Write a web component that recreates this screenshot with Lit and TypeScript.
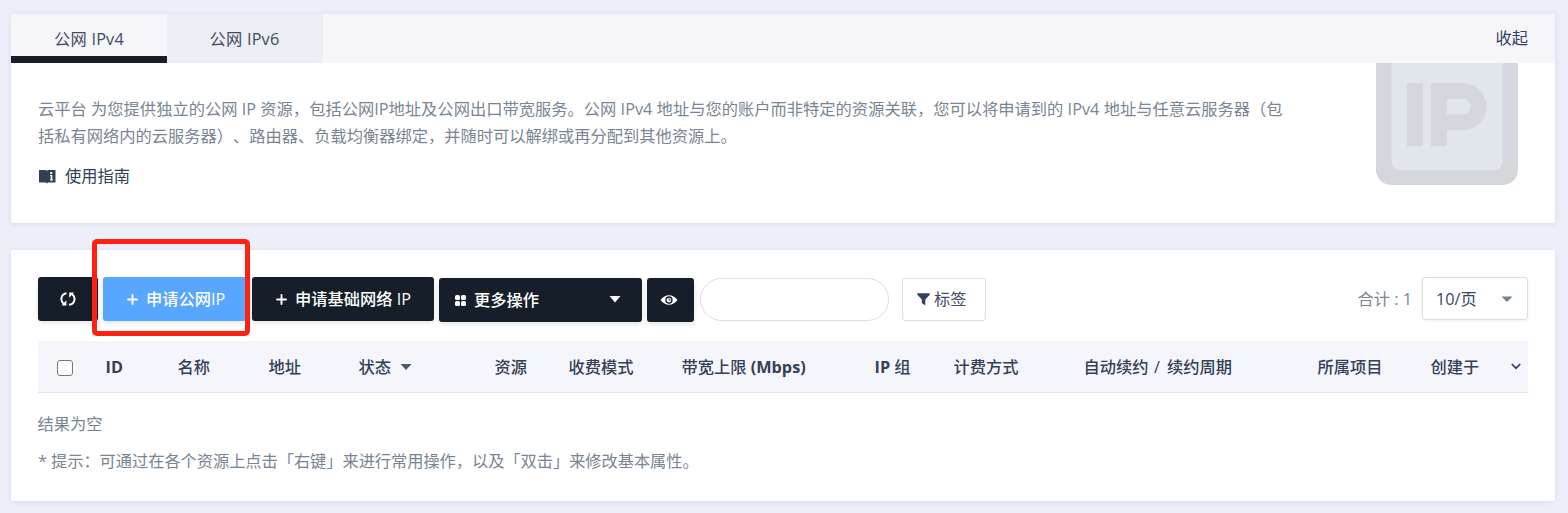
import { LitElement, html, css, svg } from 'lit';
import { customElement } from 'lit/decorators.js';

interface Column {
  label: unknown;
  width: number;
  sortable?: boolean;
}

const COLUMNS: Column[] = [
  { label: html`<b>ID</b>`, width: 72 },
  { label: '名称', width: 91 },
  { label: '地址', width: 90 },
  { label: '状态', width: 136, sortable: true },
  { label: '资源', width: 74 },
  { label: '收费模式', width: 113 },
  { label: html`带宽上限 <b>(Mbps)</b>`, width: 193 },
  { label: html`<b>IP</b> 组`, width: 79 },
  { label: '计费方式', width: 130 },
  { label: html`自动续约<i> / </i>续约周期`, width: 234 },
  { label: '所属项目', width: 113 },
  { label: '创建于', width: 80 },
];

const plus = svg`<path d="M5.5 1v9M1 5.5h9" stroke="currentColor" stroke-width="1.9" stroke-linecap="round" fill="none"/>`;

@customElement('app-root')
export class AppRoot extends LitElement {
  static styles = css`
    :host {
      display: block;
      box-sizing: border-box;
      height: 513px;
      padding: 14px 13px 0 11px;
      overflow: hidden;
      position: relative;
      background: #eceff8;
      font: 16.25px/27px 'Open Sans', 'Noto Sans CJK SC', sans-serif;
      text-spacing-trim: space-all;
      color: #798592;
      white-space: nowrap;
    }
    * { box-sizing: border-box; }
    svg { display: block; flex: none; }
    .card { background: #fff; border-radius: 2px; box-shadow: 0 1px 5px rgba(60, 80, 120, 0.12); }
    .intro { height: 209px; overflow: hidden; }
    .tabs { display: flex; height: 49px; background: #f6f5fa; color: #434a66; }
    .tab { width: 156px; padding-top: 12px; text-align: center; border-right: 1px solid #e6eef2; letter-spacing: 0.2px; }
    .tab.active { border-right: 0; border-bottom: 7px solid #161f29; }
    .tab.other { background: #ebeff3; }
    .collapse { margin-left: auto; padding: 11px 27px 0 0; color: #343f61; }
    .body { display: flex; justify-content: space-between; padding: 0 37px 0 27px; }
    .desc { padding-top: 33px; }
    .guide { display: flex; align-items: center; gap: 9px; margin-top: 13px; color: #2f4157; }
    .line { display: block; }
    .l1 { letter-spacing: 0.02px; }
    .list { height: 251px; margin-top: 27px; padding: 27px 27px 0; }
    .toolbar { display: flex; height: 44px; }
    .btn { display: flex; align-items: center; height: 44px; background: #161f29; color: #fff; border-radius: 3px; font-weight: 500; box-shadow: 0 2px 5px rgba(22, 31, 41, 0.12); }
    .refresh { width: 60px; padding-left: 22px; }
    .apply { width: 144px; margin-left: 5px; padding-left: 24px; gap: 8px; background: #57a6ff; }
    .base { width: 182px; margin-left: 5px; padding-left: 24px; gap: 8px; }
    .more { width: 203px; margin: 1px 0 0 5px; padding: 0 21px 0 16px; gap: 8px; }
    .more svg:last-child { margin-left: auto; }
    .eye { width: 47px; margin: 1px 0 0 5px; padding-left: 13px; }
    .search { width: 189px; height: 43px; margin: 1px 0 0 6px; border: 1px solid #d3dfe9; border-radius: 22px; background: #fff; padding: 0 20px; outline: none; }
    .tag { display: flex; align-items: center; gap: 4px; width: 84px; height: 43px; margin: 1px 0 0 13px; padding-left: 14px; border: 1px solid #d3dfe9; border-radius: 3px; color: #434a66; }
    .total { margin-left: auto; padding: 9px 10px 0 0; }
    .page { display: flex; align-items: center; justify-content: space-between; width: 106px; height: 43px; padding: 1px 14px 0 13px; border: 1px solid #d3dfe9; border-radius: 3px; color: #36475c; box-shadow: 0 1px 3px rgba(60, 80, 120, 0.1); }
    .thead { display: flex; align-items: center; height: 52px; margin-top: 20px; background: #f5f6fb; border-bottom: 1px solid #e0e9f1; color: #343f58; font-weight: 500; }
    .check { flex: none; width: 68px; padding-left: 19px; }
    .box { width: 16px; height: 16px; margin-top: 3px; border: 1px solid #767676; border-radius: 3px; background: #fff; }
    .col { display: flex; flex: none; align-items: center; gap: 9px; padding-top: 1px; }
    .col span { margin-left: -0.5px; white-space: pre; }
    .col b { font-weight: 700; }
    .col i { font-style: normal; font-weight: 400; letter-spacing: 1.4px; }
    .empty { padding-top: 18px; margin-left: -0.5px; }
    .tip { padding-top: 10px; letter-spacing: -0.06px; }
    .marker { position: absolute; left: 92px; top: 239px; width: 158px; height: 97px; border: 5px solid #ff2212; border-radius: 5px; }
  `;

  render() {
    return html`
      <section class="card intro">
        <nav class="tabs">
          <div class="tab active">公网 IPv4</div>
          <div class="tab other">公网 IPv6</div>
          <div class="collapse">收起</div>
        </nav>
        <div class="body">
          <div class="desc">
            <span class="line l1">云平台 为您提供独立的公网 IP 资源，包括公网IP地址及公网出口带宽服务。公网 IPv4 地址与您的账户而非特定的资源关联，您可以将申请到的 IPv4 地址与任意云服务器（包</span>
            <span class="line">括私有网络内的云服务器）、路由器、负载均衡器绑定，并随时可以解绑或再分配到其他资源上。</span>
            <div class="guide">
              <svg width="18" height="15" viewBox="0 0 18 15">
                <path fill="#2f4157" d="M1 1h6.200q1.300 0 1.800.8.5-.8 1.800-.8H17.500v12.500h-7.300L9 14.500 7.800 13.500H1z"/>
                <path fill="#fff" d="M12.300 3h2v2h-2zM12 6h2.300v4.500h.7v1h-3v-1h.7V7H12z"/>
              </svg>
              <span>使用指南</span>
            </div>
          </div>
          <svg width="142" height="123" viewBox="0 0 142 123">
            <path fill="#d4d7dc" d="M0 0h142v107a15 15 0 0 1-15 15H15a15 15 0 0 1-15-15z"/>
            <path fill="#e1e6ea" d="M15.500 0h111v99a8 8 0 0 1-8 8h-95a8 8 0 0 1-8-8z"/>
            <path fill="#d4d7dc" fill-rule="evenodd" d="M31 20h16v63H31zM55 20h32a23.500 23.500 0 0 1 0 47H71v16H55zM71 36v15.500h16a7.750 7.750 0 0 0 0-15.500z"/>
          </svg>
        </div>
      </section>

      <section class="card list">
        <div class="toolbar">
          <div class="btn refresh">
            <svg width="16" height="16" viewBox="0 0 16 16">
              <path fill="none" stroke="#fff" stroke-width="1.900" d="M6.500 2.200C.8 3-.2 10 3.800 13M9 13.800c6.200-.8 7.200-7.800 2.800-10.800"/>
              <path fill="#fff" d="M6.400 9.300v5.200H1.600zM9.200 6.700V1.500H14z"/>
            </svg>
          </div>
          <div class="btn apply"><svg width="11" height="11">${plus}</svg><span>申请公网IP</span></div>
          <div class="btn base"><svg width="11" height="11">${plus}</svg><span>申请基础网络 IP</span></div>
          <div class="btn more">
            <svg width="11" height="11" fill="#fff">
              <rect width="5" height="5" rx="1.500"/><rect x="6" width="5" height="5" rx="1.500"/>
              <rect y="6" width="5" height="5" rx="1.500"/><rect x="6" y="6" width="5" height="5" rx="1.500"/>
            </svg>
            <span>更多操作</span>
            <svg width="12" height="9"><path fill="#fff" d="M.5 0h11L6 6.500z"/></svg>
          </div>
          <div class="btn eye">
            <svg width="18" height="12" viewBox="0 0 18 12">
              <path fill="#fff" d="M.5 6C5-.5 13-.5 17.500 6 13 12.300 5 12.300.5 6z"/>
              <circle cx="9" cy="6" r="3" fill="none" stroke="#161f29" stroke-width="1.300"/>
              <path d="M9 4.200V6h1.800" fill="none" stroke="#161f29" stroke-width=".8"/>
            </svg>
          </div>
          <input class="search" aria-label="搜索" />
          <div class="tag">
            <svg width="13" height="13"><path fill="#343f61" d="M.3.300h12.400v1.500L8.300 6.500v6L4.800 10V6.500L.3 1.800z"/></svg>
            <span>标签</span>
          </div>
          <div class="total">合计 : 1</div>
          <div class="page"><span>10/页</span><svg width="12" height="6"><path fill="#73818f" d="M.5.500h11L6 6z"/></svg></div>
        </div>

        <div class="thead">
          <div class="check"><div class="box"></div></div>
          ${COLUMNS.map((c) => html`
            <div class="col" style="width:${c.width}px">
              <span>${c.label}</span>
              ${c.sortable ? html`<svg width="12" height="6"><path fill="#4a5a6e" d="M.5 0h11L6 6z"/></svg>` : ''}
            </div>`)}
          <svg width="10" height="7"><path d="M.8 1l4.200 4.200L9.200 1" fill="none" stroke="#343f61" stroke-width="1.700"/></svg>
        </div>
        <div class="empty">结果为空</div>
        <div class="tip">* 提示：可通过在各个资源上点击「右键」来进行常用操作，以及「双击」来修改基本属性。</div>
      </section>
      <div class="marker"></div>
    `;
  }
}
